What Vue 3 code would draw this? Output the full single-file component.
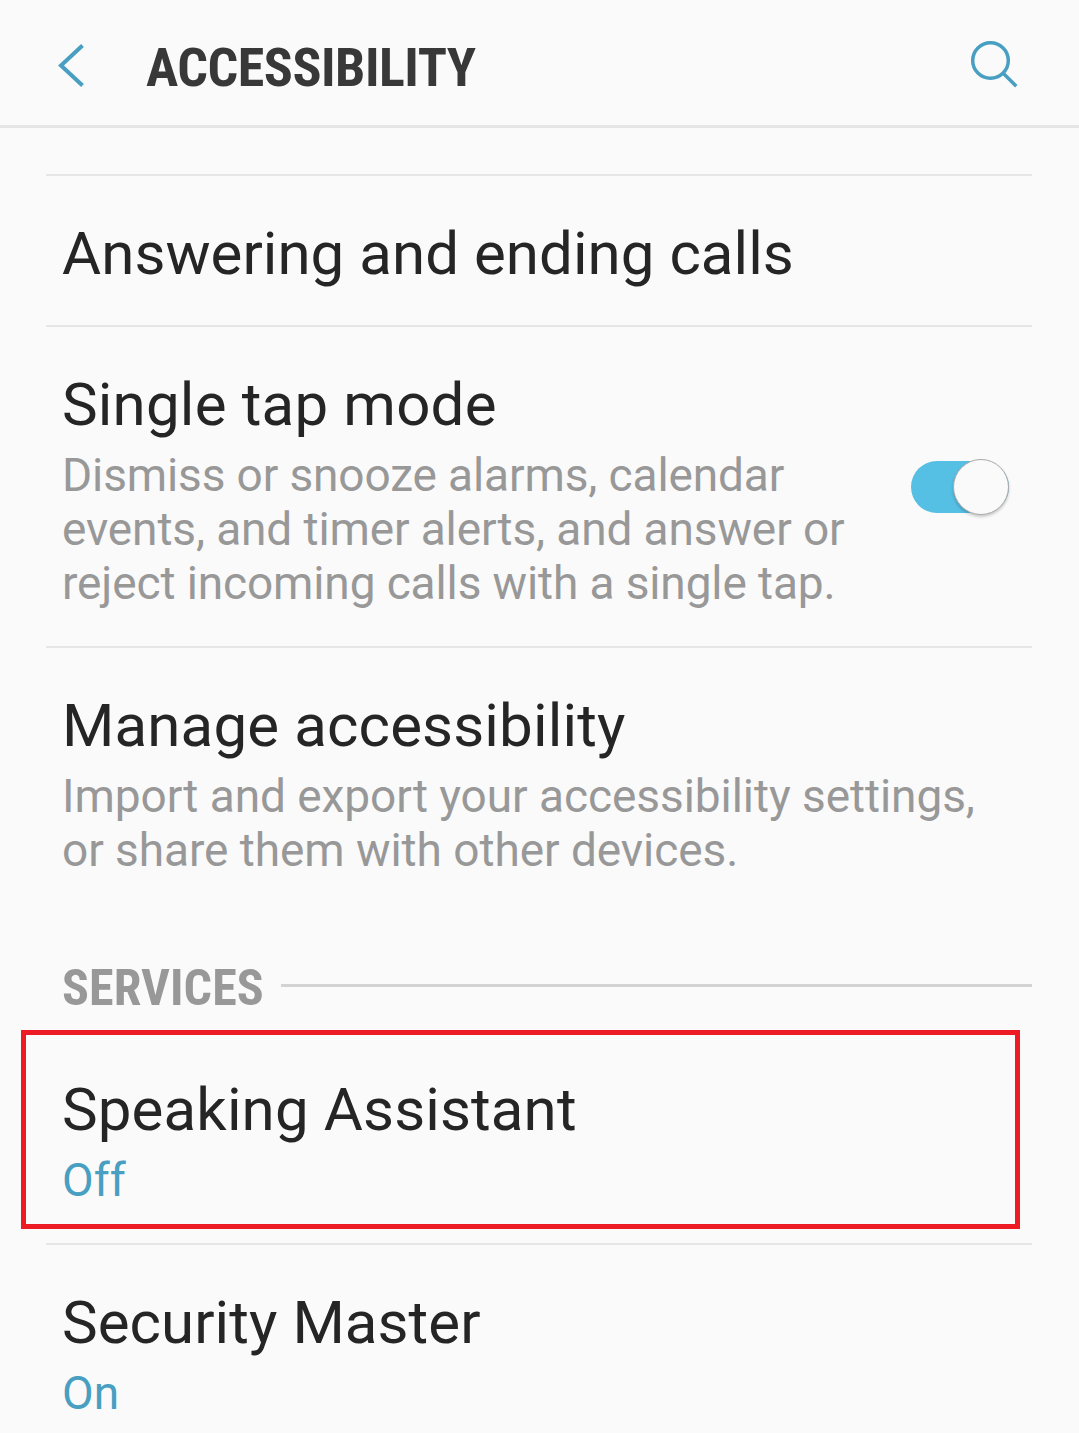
<script setup>
const general = [
  { title: 'Answering and ending calls', height: 151, tracking: 0.05, desc: [] },
  {
    title: 'Single tap mode', height: 321, tracking: 0.2, toggle: true,
    desc: [
      'Dismiss or snooze alarms, calendar',
      'events, and timer alerts, and answer or',
      'reject incoming calls with a single tap.'
    ]
  },
  {
    title: 'Manage accessibility', height: 300, tracking: 0.15, descTracking: -0.06,
    desc: ['Import and export your accessibility settings,', 'or share them with other devices.']
  }
]
const services = [
  { title: 'Speaking Assistant', status: 'Off', tracking: 0.14, active: true },
  { title: 'Security Master', status: 'On', tracking: 0.07 }
]
</script>

<template>
  <main class="screen">
    <header class="bar">
      <svg class="back" width="30" height="46" viewBox="0 0 30 46"><path d="M25.5 2.5 4 22.5 25.5 42.5" /></svg>
      <h1>ACCESSIBILITY</h1>
      <svg class="search" width="50" height="50" viewBox="0 0 50 50"><circle cx="21.5" cy="20.5" r="17.8" /><path d="M34 33 47.3 46.3" /></svg>
    </header>
    <section class="list">
      <article v-for="item in general" :key="item.title" class="row" :style="{ height: item.height + 'px' }">
        <div>
          <h2 :style="{ letterSpacing: item.tracking + 'px' }">{{ item.title }}</h2>
          <p v-for="line in item.desc" :key="line" :style="{ letterSpacing: (item.descTracking ?? -0.12) + 'px' }">{{ line }}</p>
        </div>
        <span v-if="item.toggle" class="toggle"><i></i></span>
      </article>
    </section>
    <div class="section"><h3>SERVICES</h3><hr></div>
    <section class="services">
      <article v-for="item in services" :key="item.title" class="service">
        <h2 :style="{ letterSpacing: item.tracking + 'px' }">{{ item.title }}</h2>
        <p class="status">{{ item.status }}</p>
        <span v-if="item.active" class="highlight"></span>
      </article>
    </section>
  </main>
</template>

<style>
body { margin: 0; background: #fafafa; }
</style>
<style scoped>
.screen { width: 1079px; height: 1433px; overflow: hidden; background: #fafafa; font-family: Roboto, sans-serif; color: #252525; }
h1, h2, h3, p, hr { margin: 0; }
.bar { height: 128px; box-sizing: border-box; border-bottom: 3px solid #e6e6e6; display: flex; align-items: flex-start; padding-left: 57px; }
svg { fill: none; stroke: #489fc1; stroke-width: 3.5; flex: none; }
.back { margin-top: 43px; stroke-width: 4; }
.search { margin: 40px 60px 0 auto; }
h1 { margin: 35px 0 0 59px; font: 700 54px/66px "Roboto Condensed", Roboto, sans-serif; letter-spacing: -0.5px; color: #383838; white-space: nowrap; }
.list { padding: 46px 47px 0 46px; }
.row { box-sizing: border-box; border-top: 2px solid #e6e6e6; padding: 42px 23px 0 16px; display: flex; justify-content: space-between; }
h2 { font-size: 60px; line-height: 72px; font-weight: 400; white-space: nowrap; }
p { font-size: 46px; line-height: 54px; color: #989898; white-space: nowrap; }
h2 + p { margin-top: 7px; }
.toggle { width: 98px; height: 52px; margin-top: 92px; background: #55bfe4; border-radius: 26px; position: relative; }
.toggle i { position: absolute; right: 0; top: -2px; width: 54px; height: 54px; border: 1px solid #aaa; border-radius: 50%; background: #fafafa; box-shadow: 0 2px 3px #0003; }
.section { height: 86px; display: flex; padding: 8px 47px 0 62px; box-sizing: border-box; }
h3 { font: 700 50px/60px "Roboto Condensed", Roboto, sans-serif; letter-spacing: 0.1px; color: #989898; width: 219px; white-space: nowrap; margin-top: 4px; }
hr { flex: 1; height: 3px; border: 0; background: #d3d3d3; margin-top: 30px; }
.services { padding: 0 47px 0 46px; }
.service { height: 213px; box-sizing: border-box; border-bottom: 2px solid #e6e6e6; padding: 42px 16px 0; position: relative; }
.status { color: #489fc1; }
.highlight { position: absolute; left: -25px; top: -2px; width: 989px; height: 189px; border: 5px solid #ed1c24; }
</style>
